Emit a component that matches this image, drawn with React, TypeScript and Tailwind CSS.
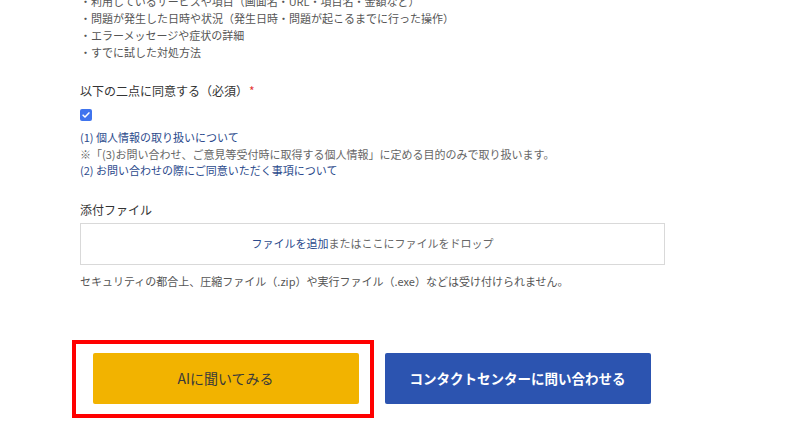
import React from 'react';

const font = "font-['Noto_Sans_CJK_JP','Noto_Sans',sans-serif]";

const checklist = [
    '・利用しているサービスや項目（画面名・URL・項目名・金額など）',
    '・問題が発生した日時や状況（発生日時・問題が起こるまでに行った操作）',
    '・エラーメッセージや症状の詳細',
    '・すでに試した対処方法',
];

const App: React.FC = () => {
    return (
        <div className={`w-[785px] h-[432px] overflow-hidden bg-white ${font}`}>
            <div className="ml-[80px] w-[585px]">
                <ul className="mt-[-7px] text-[11px] leading-[17px] text-[#555]">
                    {checklist.map((item) => (
                        <li key={item}>{item}</li>
                    ))}
                </ul>

                <div className="mt-[21px] text-[12px] leading-[18px] text-[#333]">
                    以下の二点に同意する（必須）<span className="ml-[1px] text-[#e53935]">*</span>
                </div>

                <div className="mt-[9px] flex">
                    <span className="flex h-[12px] w-[12px] items-center justify-center rounded-[2px] bg-[#3f74ee]">
                        <svg viewBox="0 0 12 12" className="h-[10px] w-[10px]" fill="none">
                            <path d="M2.5 6.2l2.3 2.3 4.7-5" stroke="white" strokeWidth="1.8" strokeLinecap="round" strokeLinejoin="round" />
                        </svg>
                    </span>
                </div>

                <div className="mt-[8px] text-[11px] leading-[16.5px]">
                    <p className="text-[#2b4a8c]">(1) 個人情報の取り扱いについて</p>
                    <p className="text-[#666]">※「(3)お問い合わせ、ご意見等受付時に取得する個人情報」に定める目的のみで取り扱います。</p>
                    <p className="text-[#2b4a8c]">(2) お問い合わせの際にご同意いただく事項について</p>
                </div>

                <div className="mt-[22px] text-[12px] leading-[18px] text-[#333]">添付ファイル</div>

                <div className="mt-[4px] flex h-[42px] items-center justify-center border border-[#d9d9d9] text-[11px] text-[#666]">
                    <span className="text-[#2b4a8c]">ファイルを追加</span>またはここにファイルをドロップ
                </div>

                <p className="mt-[8px] text-[11px] leading-[17px] text-[#555]">
                    セキュリティの都合上、圧縮ファイル（.zip）や実行ファイル（.exe）などは受け付けられません。
                </p>

                <div className="mt-[63px] flex justify-center gap-[26px] pr-[2px]">
                    <div className="relative">
                        <button className="flex h-[51px] w-[266px] items-center justify-center rounded-[2px] bg-[#f2b300] text-[14px] text-[#3a3a3a]">
                            AIに聞いてみる
                        </button>
                        <div className="pointer-events-none absolute -left-[21px] -right-[15px] -top-[13px] -bottom-[14px] border-4 border-[#ff0000]" />
                    </div>
                    <button className="flex h-[51px] w-[266px] items-center justify-center rounded-[2px] bg-[#2c54b0] text-[13.5px] font-semibold text-white">
                        コンタクトセンターに問い合わせる
                    </button>
                </div>
            </div>
        </div>
    );
};

export default App;
